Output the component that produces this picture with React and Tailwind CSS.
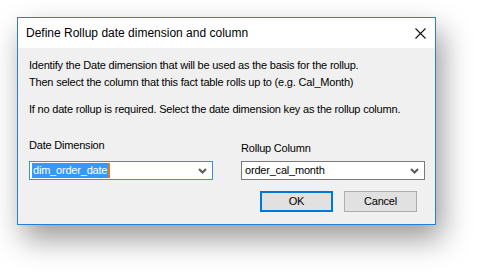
import React from 'react';

// Small dropdown chevron used by the combo boxes
function Chevron() {
  return (
    <svg width="9" height="6" viewBox="0 0 9 6" className="shrink-0">
      <path d="M1 1 L4.5 4.5 L8 1" fill="none" stroke="#5a5a5a" strokeWidth="2" />
    </svg>
  );
}

function Combo({ value, focused, width }) {
  return (
    <div
      className={`flex items-center h-[19px] bg-white pl-[2px] pr-[5px] ${width} ${
        focused ? 'border border-[#3c8ee0]' : 'border border-[#7a7a7a]'
      }`}
    >
      <div className="flex-1 flex items-center">
        {focused ? (
          <span className="bg-[#3399ff] text-white px-[1px] h-[15px] leading-[15px] border-r-2 border-[#e07b1a]">
            {value}
          </span>
        ) : (
          <span className="px-[1px] leading-[15px]">{value}</span>
        )}
      </div>
      <Chevron />
    </div>
  );
}

export default function App() {
  return (
    <div className="w-[484px] h-[274px] bg-white pt-[17px] pl-[17px] font-['Liberation_Sans',Arial,sans-serif] text-[11px] tracking-[-0.2px] text-black">
      {/* Dialog window */}
      <div className="w-[419px] h-[208px] border border-[#2a7fd4] flex flex-col shadow-[6px_14px_28px_rgba(0,0,0,0.4)]">
        {/* Title bar */}
        <div className="h-[30px] bg-white flex items-center pl-[8px] pr-[9px]">
          <span className="flex-1 text-[12px] tracking-normal text-black">
            Define Rollup date dimension and column
          </span>
          <svg width="11" height="11" viewBox="0 0 11 11">
            <path d="M0.5 0.5 L10.5 10.5 M10.5 0.5 L0.5 10.5" stroke="#111" strokeWidth="1.1" />
          </svg>
        </div>

        {/* Body */}
        <div className="flex-1 bg-[#f0f0f0] pl-[11px] pt-[11px] flex flex-col">
          <p className="leading-[13px]">Identify the Date dimension that will be used as the basis for the rollup.</p>
          <p className="leading-[13px] mt-[4px]">Then select the column that this fact table rolls up to (e.g. Cal_Month)</p>
          <p className="leading-[13px] mt-[14px]">If no date rollup is required. Select the date dimension key as the rollup column.</p>

          <div className="flex mt-[23px]">
            <div className="flex flex-col w-[183px]">
              <span className="leading-[13px] h-[16px] mb-[6px]">Date Dimension</span>
              <Combo value="dim_order_date" focused width="w-[184px]" />
            </div>
            <div className="flex flex-col ml-[29px]">
              <span className="leading-[13px] h-[16px] mb-[6px] pt-[3px]">Rollup Column</span>
              <Combo value="order_cal_month" width="w-[184px]" />
            </div>
          </div>

          <div className="flex justify-end gap-[11px] pr-[18px] mt-[11px]">
            <button className="w-[73px] h-[21px] bg-[#e1e1e1] border-2 border-[#0078d7] leading-none">OK</button>
            <button className="w-[73px] h-[21px] bg-[#e1e1e1] border border-[#adadad] leading-none">Cancel</button>
          </div>
        </div>
      </div>
    </div>
  );
}
